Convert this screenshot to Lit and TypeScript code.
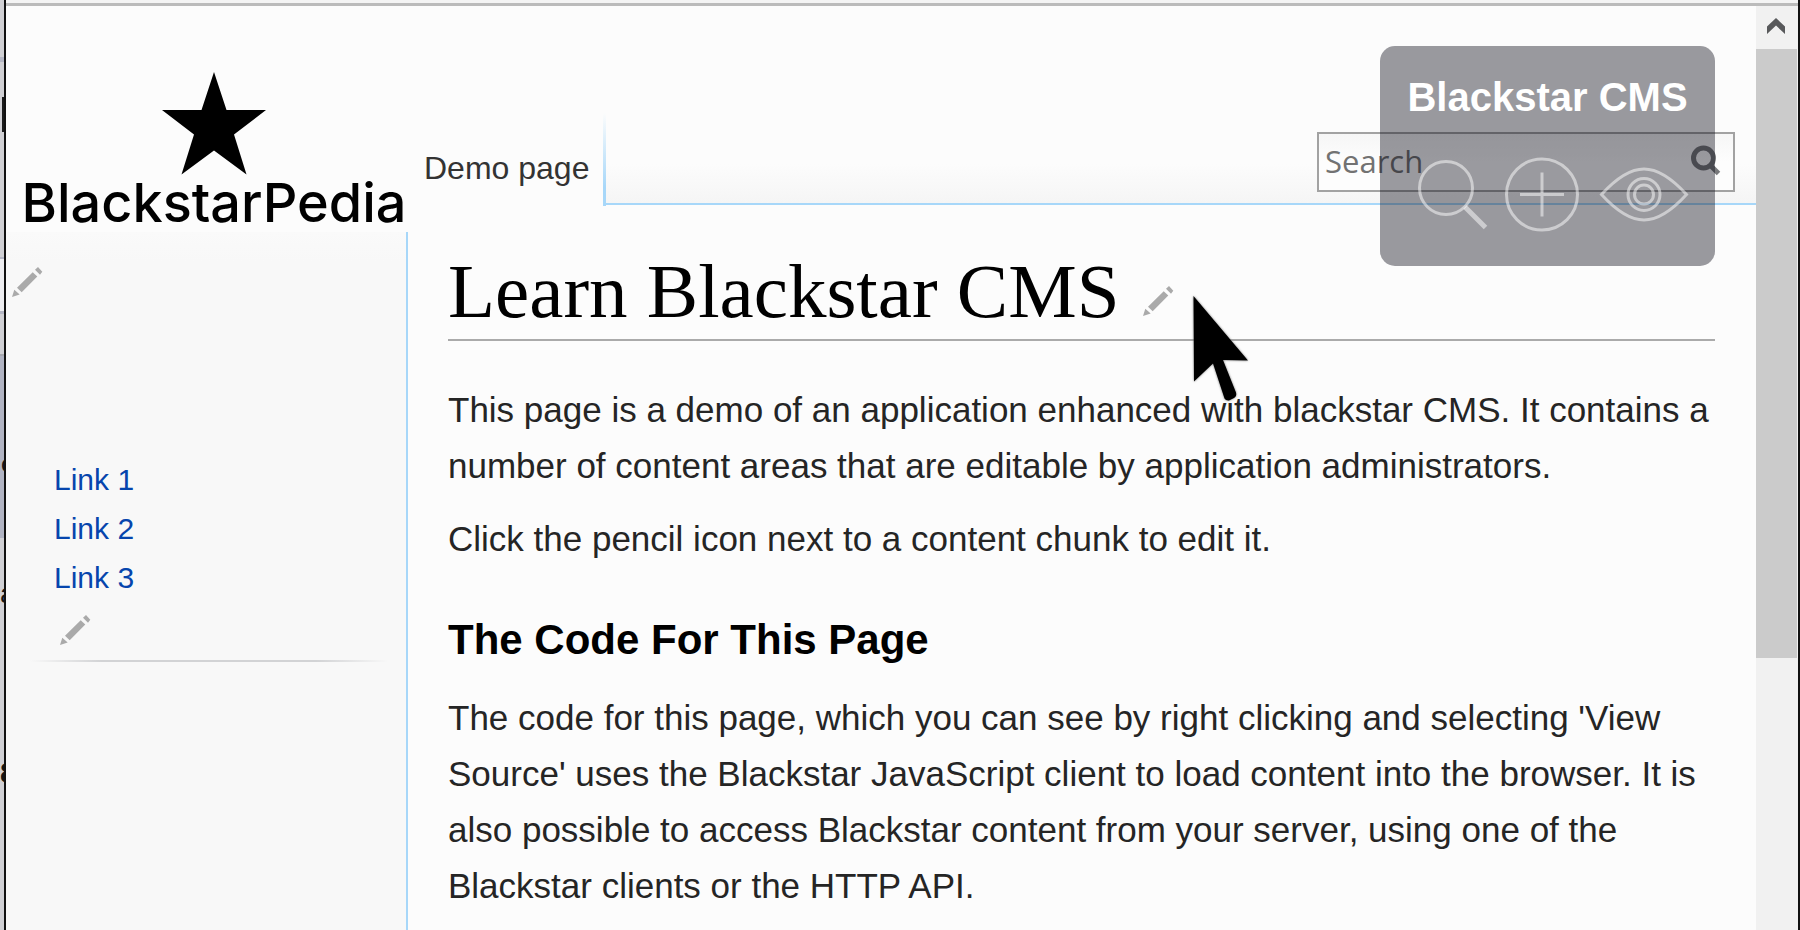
import { LitElement, html, css, svg } from "lit";
import { customElement, property } from "lit/decorators.js";

@customElement("edit-pencil")
class EditPencil extends LitElement {
  @property() label = "Edit";

  static styles = css`
    :host { display: inline-block; line-height: 0; }
    .edit { display: block; padding: 0; border: 0; background: none; cursor: pointer; }
    .glyph { display: block; width: 31px; height: 31px; fill: #aaa; }
  `;

  render() {
    return html`<button class="edit" aria-label=${this.label}>
      <svg class="glyph" viewBox="0 0 31 31" aria-hidden="true">
        <path d="M0 30 2.3 22.7 7.7 27.5ZM5 20.7 20.7 5.3 25.3 9.5 9.7 25.3ZM23 2.7 26 0 30.3 4.7 28 7.7Z" />
      </svg>
    </button>`;
  }
}

@customElement("cms-toolbar")
class CmsToolbar extends LitElement {
  static styles = css`
    :host {
      display: block; box-sizing: border-box; width: 335px; height: 220px;
      padding-top: 28px; border-radius: 15px; background: rgba(4, 4, 18, 0.4);
      font-family: "Liberation Sans", Arial, sans-serif;
    }
    .title { margin: 0; color: #fff; font-size: 40px; line-height: 46px; font-weight: 700; text-align: center; }
    .tools { display: flex; align-items: center; justify-content: center; gap: 16px; margin-top: 36px; padding-left: 12px; }
    .tool { display: block; padding: 0; border: 0; background: none; cursor: pointer; }
    .glyph { display: block; height: 76px; fill: none; stroke: #fff; stroke-opacity: 0.5; stroke-width: 3; }
  `;

  render() {
    const tools = [
      { name: "Search content", width: 70, art: svg`<circle cx="28" cy="32" r="26.5"/><path d="M47 51 67.500 71.500" stroke-width="5"/>` },
      { name: "Add content", width: 79, art: svg`<circle cx="38" cy="38.500" r="35.500"/><path d="M38 16.500V60.500M16 38.500H60"/>` },
      { name: "Preview content", width: 90, art: svg`<path d="M2.500 38.500C18 21.500 31 13 45 13S72 21.500 87.500 38.500C72 55.500 59 64 45 64S18 55.500 2.500 38.500Z"/><circle cx="45" cy="38.500" r="16"/><circle cx="45" cy="38.500" r="9.500"/>` },
    ];
    return html`
      <h2 class="title">Blackstar CMS</h2>
      <div class="tools">
        ${tools.map((t) => html`<button class="tool" aria-label=${t.name}>
          <svg class="glyph" width=${t.width} viewBox="0 0 ${t.width} 76" aria-hidden="true">${t.art}</svg>
        </button>`)}
      </div>`;
  }
}

@customElement("app-root")
class AppRoot extends LitElement {
  static styles = css`
    :host {
      display: flex; height: 100vh; overflow: hidden; position: relative;
      background: #fcfcfc; color: #252525; font-family: "Liberation Sans", Arial, sans-serif;
    }
    a { text-decoration: none; }

    .behind {
      flex: none; box-sizing: border-box; width: 6px; overflow: hidden; color: #141414;
      border-right: 2px solid #111; background: #d0d0d4; display: flex; flex-direction: column;
    }
    .behind > div { flex: none; box-sizing: border-box; overflow: hidden; }
    .b1 { height: 62px; border-bottom: 5px solid #b4b6c4; }
    .b2 { height: 35px; }
    .b3 { height: 35px; margin-left: 2px; background: #1b1b1b; }
    .b4 { height: 127px; border-bottom: 2px solid #b4b6c4; }
    .b5 { height: 52px; background: #ededf0; }
    .b6 { height: 45px; border-top: 3px solid #b4b6c4; border-bottom: 2px solid #a8a9b0; }
    .b7 { height: 182px; padding: 96px 0 0 1px; background: #b1b4c3; font-size: 24px; line-height: 24px; }
    .b8 { height: 162px; padding-top: 42px; font-size: 28px; line-height: 28px; }
    .b9 { height: 140px; padding-top: 57px; font-size: 30px; line-height: 32px; font-weight: 700; }

    .window { flex: 1; min-width: 0; display: flex; flex-direction: column; border-right: 2px solid #111; }
    .edge { flex: none; height: 3px; border-bottom: 3px solid #bbb; background: #f4f4f4; }
    .view { flex: 1; min-height: 0; display: flex; }
    .page { flex: 1; min-width: 0; display: grid; grid-template-columns: 402px minmax(0, 1fr); }

    .left { display: flex; flex-direction: column; }
    .logo { display: flex; flex-direction: column; align-items: center; height: 226px; box-sizing: border-box; padding: 66px 0 0 14px; color: #000; }
    .star { flex: none; display: block; width: 104px; height: 103px; }
    .brand { font: 500 54px/56px Inter, Lato, sans-serif; white-space: nowrap; }
    .side { flex: 1; box-sizing: border-box; border-right: 2px solid #a7d7f9; background: linear-gradient(#fafafa, #f8f8f8 30px); padding: 35px 18px 0 6px; }
    .links { list-style: none; margin: 153px 0 0 42px; padding: 0; font-size: 30px; line-height: 49px; }
    .links a { color: #0645ad; }
    .nav-edit { display: block; margin: 13px 0 0 48px; }
    .rule { height: 2px; margin: 14px 0 0 18px; background: linear-gradient(90deg, transparent, #d2d3d5 20%, #d2d3d5 80%, transparent); }

    .head { display: flex; height: 199px; }
    .tab { flex: none; box-sizing: border-box; padding: 144px 14px 0 16px; font-size: 32px; line-height: 36px; color: #333; white-space: nowrap; }
    .tabline { flex: none; width: 3px; height: 93px; margin-top: 107px; background: linear-gradient(rgba(167, 215, 249, 0), #a7d7f9 80%); }
    .bar { flex: 1; box-sizing: border-box; border-bottom: 2px solid #a7d7f9; background: linear-gradient(transparent 158px, #f5f5f5); padding: 126px 21px 0 0; display: flex; justify-content: flex-end; align-items: flex-start; }
    .search { display: flex; align-items: center; box-sizing: border-box; width: 418px; height: 60px; border: 2px solid #a2a2a2; background: linear-gradient(#f6f6f6, #fdfdfd 50%); padding: 0 11px 2px 6px; }
    .field { flex: 1; min-width: 0; border: 0; padding: 0; background: none; outline: 0; font: 31px/36px "Open Sans", "Noto Sans", sans-serif; color: #222; }
    .field::placeholder { color: #727272; opacity: 1; }
    .go { padding: 0; border: 0; background: none; cursor: pointer; }
    .lens { display: block; width: 32px; height: 32px; fill: none; stroke: #77787b; stroke-width: 5; }

    .content { padding: 50px 41px 0 40px; }
    .heading { display: flex; align-items: flex-start; height: 86px; box-sizing: border-box; border-bottom: 2px solid #aaa; gap: 24px; }
    .heading edit-pencil { margin-top: 31px; }
    h1 { margin: 0; font: 400 77px/72px "Liberation Serif", serif; color: #000; white-space: nowrap; }
    .text { margin: 0; font-size: 35px; line-height: 56px; }
    .text + .text { margin-top: 17px; }
    .first { margin-top: 41px; }
    h3 { margin: 43px 0 20px; font-size: 42px; line-height: 60px; font-weight: 700; color: #000; }

    .scroll { flex: none; width: 42px; display: flex; flex-direction: column; background: #f1f1f1; }
    .up { flex: none; height: 43px; padding: 0 2px 4px 0; border: 0; background: #f1f1f1; }
    .chev { display: block; margin: 0 auto; width: 18px; height: 16px; fill: #58595b; }
    .thumb { height: 609px; background: #cbcbcb; margin-right: 1px; }

    .tools { position: absolute; top: 46px; right: 85px; }
    .cursor { position: absolute; left: 1190px; top: 293px; width: 64px; height: 112px; filter: drop-shadow(0 0 1px #777); pointer-events: none; }
  `;

  render() {
    return html`
      <div class="behind" aria-hidden="true">
        <div class="b1"></div><div class="b2"></div><div class="b3"></div><div class="b4"></div>
        <div class="b5"></div><div class="b6"></div><div class="b7">c</div><div class="b8">a</div><div class="b9">8</div>
      </div>
      <div class="window">
        <div class="edge"></div>
        <div class="view">
          <div class="page">
            <div class="left">
              <a class="logo" href="#">
                <svg class="star" viewBox="0 0 104 103" aria-hidden="true"><path d="M52 0 64.500 38H104L72 62.500 84.500 102.500 52 78.500 19.500 102.500 32 62.500 0 38H39.500Z" /></svg>
                <span class="brand">BlackstarPedia</span>
              </a>
              <nav class="side" aria-label="Sidebar">
                <edit-pencil label="Edit sidebar"></edit-pencil>
                <ul class="links">
                  ${[1, 2, 3].map((n) => html`<li><a href="#link-${n}">Link ${n}</a></li>`)}
                </ul>
                <edit-pencil class="nav-edit" label="Edit links"></edit-pencil>
                <div class="rule"></div>
              </nav>
            </div>
            <div class="right">
              <header class="head">
                <a class="tab" href="#demo">Demo page</a>
                <div class="tabline"></div>
                <div class="bar">
                  <form class="search" role="search" @submit=${(e: Event) => e.preventDefault()}>
                    <input class="field" type="text" placeholder="Search" aria-label="Search" />
                    <button class="go" aria-label="Go">
                      <svg class="lens" viewBox="0 0 32 32" aria-hidden="true"><circle cx="13.500" cy="13" r="10" /><path d="M20 20 28.500 28.500" /></svg>
                    </button>
                  </form>
                </div>
              </header>
              <main class="content">
                <div class="heading"><h1>Learn Blackstar CMS</h1><edit-pencil label="Edit heading"></edit-pencil></div>
                <p class="text first">This page is a demo of an application enhanced with blackstar CMS. It contains a number of content areas that are editable by application administrators.</p>
                <p class="text">Click the pencil icon next to a content chunk to edit it.</p>
                <h3>The Code For This Page</h3>
                <p class="text">The code for this page, which you can see by right clicking and selecting 'View Source' uses the Blackstar JavaScript client to load content into the browser. It is also possible to access Blackstar content from your server, using one of the Blackstar clients or the HTTP API.</p>
              </main>
            </div>
          </div>
          <div class="scroll">
            <button class="up" aria-label="Scroll up"><svg class="chev" viewBox="0 0 18 16" aria-hidden="true"><path d="M9 0 18 8.500V16L9 7.500 0 16V8.500Z" /></svg></button>
            <div class="thumb"></div>
          </div>
        </div>
      </div>
      <cms-toolbar class="tools"></cms-toolbar>
      <svg class="cursor" viewBox="0 0 64 112" aria-hidden="true"><path d="M3.500 3 58 67.500 33 67 46 99.500Q47 103 44 105L39 107.500Q36 108 34.500 105.500L23 70.500 4 88.500Z" /></svg>
    `;
  }
}
